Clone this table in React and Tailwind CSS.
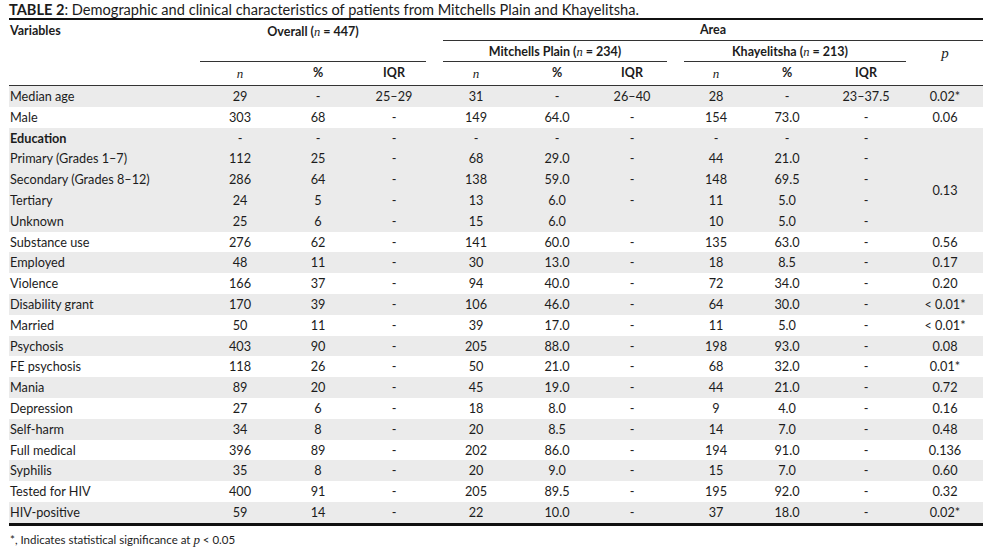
import React from "react";

const COLS = "grid grid-cols-[191px_80px_76px_76px_88px_74px_76px_92px_50px_108px_50px_13px]";

const rows = [
  { c: ["Median age", "29", "-", "25–29", "31", "-", "26–40", "28", "-", "23–37.5", "0.02*"], g: true },
  { c: ["Male", "303", "68", "-", "149", "64.0", "-", "154", "73.0", "-", "0.06"], g: false },
  { edu: true },
  { c: ["Substance use", "276", "62", "-", "141", "60.0", "-", "135", "63.0", "-", "0.56"], g: false },
  { c: ["Employed", "48", "11", "-", "30", "13.0", "-", "18", "8.5", "-", "0.17"], g: true },
  { c: ["Violence", "166", "37", "-", "94", "40.0", "-", "72", "34.0", "-", "0.20"], g: false },
  { c: ["Disability grant", "170", "39", "-", "106", "46.0", "-", "64", "30.0", "-", "< 0.01*"], g: true },
  { c: ["Married", "50", "11", "-", "39", "17.0", "-", "11", "5.0", "-", "< 0.01*"], g: false },
  { c: ["Psychosis", "403", "90", "-", "205", "88.0", "-", "198", "93.0", "-", "0.08"], g: true },
  { c: ["FE psychosis", "118", "26", "-", "50", "21.0", "-", "68", "32.0", "-", "0.01*"], g: false },
  { c: ["Mania", "89", "20", "-", "45", "19.0", "-", "44", "21.0", "-", "0.72"], g: true },
  { c: ["Depression", "27", "6", "-", "18", "8.0", "-", "9", "4.0", "-", "0.16"], g: false },
  { c: ["Self-harm", "34", "8", "-", "20", "8.5", "-", "14", "7.0", "-", "0.48"], g: true },
  { c: ["Full medical", "396", "89", "-", "202", "86.0", "-", "194", "91.0", "-", "0.136"], g: false },
  { c: ["Syphilis", "35", "8", "-", "20", "9.0", "-", "15", "7.0", "-", "0.60"], g: true },
  { c: ["Tested for HIV", "400", "91", "-", "205", "89.5", "-", "195", "92.0", "-", "0.32"], g: false },
  { c: ["HIV-positive", "59", "14", "-", "22", "10.0", "-", "37", "18.0", "-", "0.02*"], g: true },
];

const edu = [
  ["Education", "-", "-", "-", "-", "-", "-", "-", "-", "-"],
  ["Primary (Grades 1–7)", "112", "25", "-", "68", "29.0", "-", "44", "21.0", "-"],
  ["Secondary (Grades 8–12)", "286", "64", "-", "138", "59.0", "-", "148", "69.5", "-"],
  ["Tertiary", "24", "5", "-", "13", "6.0", "-", "11", "5.0", "-"],
  ["Unknown", "25", "6", "-", "15", "6.0", "", "10", "5.0", "-"],
];

const N = () => <span className="font-normal italic font-['Liberation_Serif',serif]">n</span>;

function Cells({ c }) {
  return c.map((v, i) =>
    i === 0 ? (
      <div key={i} className="flex items-center pl-[1px]">{v}</div>
    ) : (
      <div key={i} className="flex items-center justify-center">{v}</div>
    )
  );
}

export default function App() {
  return (
    <div className="w-[997px] h-[551px] bg-white text-[#1c1c1c] font-['Lato',sans-serif] text-[12.7px] leading-none pl-[9px] pt-[2px]">
      <div className="w-[974px] border-b-[2px] border-[#111] h-[18px] flex items-center text-[14.6px]">
        <span className="font-bold">TABLE 2</span>
        <span>: Demographic and clinical characteristics of patients from Mitchells Plain and Khayelitsha.</span>
      </div>

      <div className={`${COLS} grid-rows-[21px_21px_23px] w-[974px] border-b border-[#333] font-bold text-[12.5px]`}>
        <div className="col-start-1 row-start-1 flex items-center pl-[1px] pt-[1px]">Variables</div>
        <div className="col-start-2 col-span-3 row-start-1 row-span-2 mr-[6px] border-b border-[#333] flex items-start justify-center pt-[6px]">
          <span>Overall (<N /> = 447)</span>
        </div>
        <div className="col-start-5 col-span-8 row-start-1 ml-[11px] border-b border-[#333] flex items-center justify-center pt-[1px]">
          Area
        </div>
        <div className="col-start-5 col-span-3 row-start-2 ml-[11px] mr-[3px] border-b border-[#333] flex items-center justify-center pt-[2px]">
          <span>Mitchells Plain (<N /> = 234)</span>
        </div>
        <div className="col-start-8 col-span-3 row-start-2 ml-[14px] mr-[14px] border-b border-[#333] flex items-center justify-center pr-[10px] pt-[2px]">
          <span>Khayelitsha (<N /> = 213)</span>
        </div>
        <div className="col-start-11 row-start-2 flex items-center justify-center pt-[3px] text-[15px] italic font-normal font-['Liberation_Serif',serif]">
          p
        </div>
        <div className="col-start-2 row-start-3 flex items-center justify-center text-[13px]"><N /></div>
        <div className="col-start-3 row-start-3 flex items-center justify-center">%</div>
        <div className="col-start-4 row-start-3 flex items-center justify-center">IQR</div>
        <div className="col-start-5 row-start-3 flex items-center justify-center text-[13px]"><N /></div>
        <div className="col-start-6 row-start-3 flex items-center justify-center">%</div>
        <div className="col-start-7 row-start-3 flex items-center justify-center">IQR</div>
        <div className="col-start-8 row-start-3 flex items-center justify-center text-[13px]"><N /></div>
        <div className="col-start-9 row-start-3 flex items-center justify-center">%</div>
        <div className="col-start-10 row-start-3 flex items-center justify-center">IQR</div>
      </div>

      <div className="w-[974px] border-b-[3px] border-[#111]">
        {rows.map((r, idx) =>
          r.edu ? (
            <div key={idx} className={`${COLS} grid-rows-[repeat(5,20.8px)] bg-[#ebebeb]`}>
              {edu.map((e, j) => (
                <React.Fragment key={j}>
                  {e.map((v, i) => (
                    <div
                      key={i}
                      className={`flex items-center ${i === 0 ? "pl-[1px]" : "justify-center"} ${j === 0 && i === 0 ? "font-bold" : ""}`}
                      style={{ gridRow: j + 1, gridColumn: i + 1 }}
                    >
                      {v}
                    </div>
                  ))}
                </React.Fragment>
              ))}
              <div className="col-start-11 row-start-2 row-span-4 flex items-center justify-center">0.13</div>
            </div>
          ) : (
            <div key={idx} className={`${COLS} h-[20.8px] ${r.g ? "bg-[#ebebeb]" : "bg-white"}`}>
              <Cells c={r.c} />
            </div>
          )
        )}
      </div>

      <div className="mt-[7px] text-[11.5px] pl-[1px]">
        <span>*, Indicates statistical significance at </span>
        <span className="italic font-['Liberation_Serif',serif] text-[13px]">p</span>
        <span> &lt; 0.05</span>
      </div>
    </div>
  );
}
